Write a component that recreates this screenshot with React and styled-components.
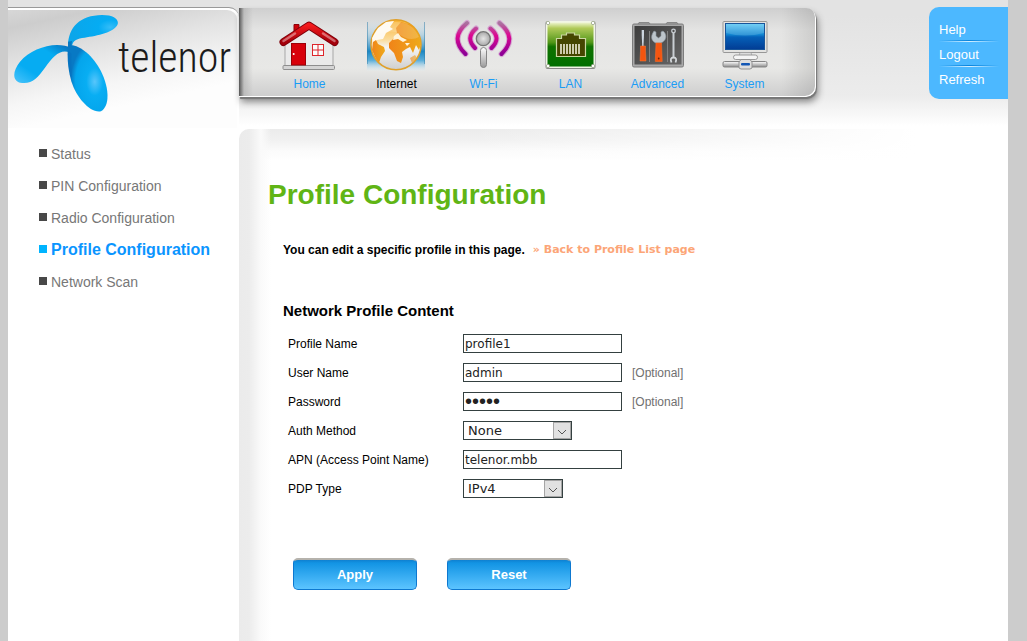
import React from 'react';
import styled, { createGlobalStyle } from 'styled-components';

const GlobalStyle = createGlobalStyle`
	* {
		box-sizing: border-box;
	}
	body {
		margin: 0;
		background: #ccc;
		font-family: 'Liberation Sans', Arial, sans-serif;
		font-size: 12px;
		color: #000;
	}
	a {
		text-decoration: none;
	}
`;

const Page = styled.div`
	display: flex;
	flex-direction: column;
	min-height: 100vh;
	margin: 0 19px 0 8px;
	background: #fff;
`;

const Header = styled.header`
	display: flex;
	align-items: flex-start;
	height: 128px;
	padding-top: 7px;
	background: linear-gradient(#e3e3e3 0, #e3e3e3 16px, #ececec 96px, #fff 126px);
`;

const Brand = styled.a`
	display: flex;
	align-items: flex-start;
	flex: none;
	width: 231px;
	height: 121px;
	padding: 6px 0 0 6px;
	border-top: 1px solid #999;
	border-radius: 0 10px 0 0;
	background: linear-gradient(168deg, #d8d8d8 0, #cdcdcd 20px, #e4e4e4 60px, #f6f6f6 96px, #fdfdfd 120px);
	box-shadow: inset -2px 2px 0 #fff;
	color: #1b1b1b;
`;

const Wordmark = styled.span`
	padding-top: 16px;
	font-family: 'Roboto Condensed', 'Liberation Sans Narrow', 'DejaVu Sans Condensed', Roboto, sans-serif;
	font-size: 42px;
	font-weight: 300;
	line-height: 56px;
`;

const Nav = styled.nav`
	display: flex;
	flex: none;
	margin-top: 1px;
	padding: 10px 28px 4px 27px;
	height: 89px;
	border-radius: 0 10px 10px 0;
	background: linear-gradient(90deg, #555 0, #aaa8 5px, #ccc0 14px),
		linear-gradient(90deg, #0000 94%, #0000001c), linear-gradient(#cfcfcf, #e4e4e3 22px, #e8e8e6 60px, #cdcdcd);
	box-shadow: inset -1px -1px 0 #fff, 1px 2px 1px #777, 2px 5px 7px #888;
`;

const NavItem = styled.a`
	display: flex;
	flex-direction: column;
	align-items: center;
	width: 87px;
	line-height: 16px;
	gap: 4px;
	color: ${props => (props.$active ? '#000' : '#1a9cf5')};
`;

const UserMenu = styled.nav`
	width: 79px;
	height: 92px;
	margin-left: auto;
	padding: 10px 9px 0 10px;
	border-radius: 10px 0 0 10px;
	background: #4cb8ff;
`;

const UserLink = styled.a`
	display: block;
	height: 25px;
	color: #fff;
	font-size: 13px;
	line-height: 25px;
	background: linear-gradient(90deg, #4cb8ff, #0a84dc 50%, #4cb8ff) 0 23px / 100% 1px no-repeat,
		linear-gradient(90deg, #4cb8ff, #d5efff 50%, #4cb8ff) 0 24px / 100% 1px no-repeat;
	&:last-child {
		background: none;
	}
`;

const Body = styled.div`
	display: flex;
	flex: 1;
	padding-top: 1px;
`;

const Sidebar = styled.ul`
	flex: none;
	width: 231px;
	margin: 0;
	padding: 9px 0 0 31px;
	list-style: none;
`;

const SideItem = styled.li`
	height: 32px;

	a {
		display: flex;
		align-items: center;
		gap: 4px;
		line-height: 32px;
		font-size: ${props => (props.$active ? '16px' : '14px')};
		font-weight: ${props => (props.$active ? 'bold' : 'normal')};
		color: ${props => (props.$active ? '#0a95ff' : '#777')};
	}
	a::before {
		content: '';
		width: 8px;
		height: 8px;
		margin-bottom: 3px;
		background: ${props => (props.$active ? '#00b4ff' : '#484848')};
	}
`;

const Main = styled.main`
	flex: 1;
	padding: 50px 24px 40px 29px;
	border-top-left-radius: 10px;
	background: linear-gradient(90deg, #ebebeb 0, #ececec 10px, #fafafa 22px, #fff0 32px),
		linear-gradient(90deg, #fff0 30%, #fff 88%),
		linear-gradient(#ebebeb 0, #f0f0f0 10px, #fbfbfb 22px, #fff 32px);
`;

const Title = styled.h1`
	margin: 0;
	font-size: 28px;
	line-height: 32px;
	color: #60b515;
`;

const Intro = styled.p`
	display: flex;
	gap: 8px;
	margin: 31px 0 45px 15px;
	font-weight: bold;
	line-height: 16px;
`;

const BackLink = styled.a`
	font-family: 'DejaVu Sans', Verdana, sans-serif;
	font-size: 11px;
	color: #fca577;
`;

const Form = styled.form`
	margin-left: 15px;
`;

const SectionTitle = styled.h2`
	margin: 0 0 15px;
	font-size: 15px;
	line-height: 16px;
`;

const Fields = styled.div`
	display: grid;
	gap: 10px;
	margin-left: 5px;
`;

const Field = styled.div`
	display: flex;
	align-items: center;
	height: 19px;

	label {
		width: 175px;
	}
`;

const TextInput = styled.input`
	width: 159px;
	height: 19px;
	padding: 0 1px;
	border: 1px solid #344040;
	border-radius: 0;
	background: #fff;
	color: #222;
	font-family: 'DejaVu Sans', Verdana, sans-serif;
	font-size: 12px;

	&[type='password'] {
		font-family: 'Liberation Sans', Arial, sans-serif;
		font-size: 20px;
	}
`;

const Hint = styled.span`
	margin-left: 10px;
	color: #707070;
`;

const SelectBox = styled.div`
	display: grid;
	width: ${props => props.$width}px;
	height: 19px;
	border: 1px solid #344040;

	select,
	svg {
		grid-area: 1 / 1;
	}
	select {
		width: 100%;
		height: 17px;
		padding: 0 0 0 4px;
		border: 0;
		appearance: none;
		background: #fff;
		color: #222;
		font-family: 'DejaVu Sans', Verdana, sans-serif;
		font-size: 13px;
		line-height: 17px;
	}
	svg {
		justify-self: end;
		pointer-events: none;
	}
`;

const Actions = styled.div`
	display: flex;
	gap: 30px;
	margin: 60px 0 0 10px;
`;

const Button = styled.button`
	width: 124px;
	height: 32px;
	padding: 0;
	border: 1px solid #0d78d0;
	border-top: 2px solid #b5b2ac;
	border-radius: 5px;
	background: linear-gradient(#0f80d0 0, #1294e4 3px, #5cc4ff);
	color: #fff;
	font-family: inherit;
	font-size: 13px;
	font-weight: bold;
`;

const Icon = ({ children }) => (
	<svg width="61" height="54" viewBox="0 0 61 54" fill="none" aria-hidden="true">
		{children}
	</svg>
);

const LogoMark = () => (
	<svg width="104" height="99" viewBox="42 39 312 297" aria-hidden="true">
		<defs>
			<radialGradient id="petalDown" cx="0.68" cy="0.55" r="0.6">
				<stop offset="0" stopColor="#58c6fb" />
				<stop offset="0.35" stopColor="#08aef3" />
				<stop offset="0.8" stopColor="#04a5ec" />
				<stop offset="1" stopColor="#0879c4" />
			</radialGradient>
			<linearGradient id="petalLeft" x1="0" y1="1" x2="1" y2="0">
				<stop offset="0" stopColor="#4dc4fb" />
				<stop offset="0.3" stopColor="#06acf2" />
				<stop offset="0.7" stopColor="#06acf2" />
				<stop offset="1" stopColor="#0869b5" />
			</linearGradient>
			<radialGradient id="petalTop" cx="0.85" cy="0.4" r="0.8">
				<stop offset="0" stopColor="#35bdf8" />
				<stop offset="0.3" stopColor="#05acf3" />
				<stop offset="1" stopColor="#0ba6ea" />
			</radialGradient>
		</defs>
		<path d="M204 134C206 78 240 43 306 42C342 42 357 55 353 70C344 94 292 105 254 110C232 112 219 118 216 134Z" fill="url(#petalTop)" />
		<path d="M216 142C168 118 96 141 60 182C38 209 36 239 60 245C94 251 111 234 136 199C160 165 182 142 210 155Z" fill="url(#petalLeft)" />
		<path d="M204 134C232 126 277 160 303 211C327 259 331 314 303 331C271 338 229 290 214 241C203 204 201 165 204 134Z" fill="url(#petalDown)" />
		<path d="M204 122L216 120L214 137L204 139Z" fill="#0878c2" />
		<path d="M204 150L214 157Q214 190 215 235Q203 197 204 150Z" fill="#0870bd" opacity=".55" />
	</svg>
);

const HomeIcon = () => (
	<Icon>
		<defs>
			<linearGradient id="roof" x1="0" y1="0" x2="0" y2="1">
				<stop offset="0" stopColor="#f31a1c" />
				<stop offset="1" stopColor="#a4000b" />
			</linearGradient>
		</defs>
		<path d="M6 24L30 8L54 24V48H6Z" fill="#eaeaea" stroke="#a7a7a7" />
		<rect x="4" y="47.5" width="51.5" height="4" rx="1" fill="#d5d5d5" stroke="#8e8e8e" />
		<path d="M15 15V6.500H20V11Z" fill="#cf0008" stroke="#8c0008" />
		<path d="M4.500 24L30 7.500L55.500 24" stroke="#7d000a" strokeWidth="8" strokeLinecap="round" strokeLinejoin="round" />
		<path d="M4.500 24L30 7.500L55.500 24" stroke="url(#roof)" strokeWidth="6" strokeLinecap="round" strokeLinejoin="round" />
		<path d="M4.500 23L16 15.500M55.500 23L44 15.500" stroke="#fff" strokeOpacity=".4" strokeWidth="2.500" strokeLinecap="round" />
		<rect x="12.500" y="25.500" width="14" height="21.500" fill="#d8000a" stroke="#9c0007" />
		<circle cx="14.700" cy="36" r="1" fill="#fff" />
		<rect x="33.500" y="26.500" width="11" height="11" fill="#fbfbfb" stroke="#dd252b" />
		<path d="M39 26V38M33 32H45" stroke="#dd252b" />
	</Icon>
);

const InternetIcon = () => (
	<Icon>
		<defs>
			<linearGradient id="beam" x1="0" y1="0" x2="0" y2="1">
				<stop offset="0" stopColor="#c8dde8" stopOpacity="0" />
				<stop offset="0.3" stopColor="#9cc8df" stopOpacity=".6" />
				<stop offset="0.62" stopColor="#1c87c3" />
				<stop offset="0.8" stopColor="#5fb0da" />
				<stop offset="1" stopColor="#e4eef2" stopOpacity=".2" />
			</linearGradient>
			<linearGradient id="sea" x1="0" y1="0" x2="0" y2="1">
				<stop offset="0" stopColor="#f8b233" />
				<stop offset="0.4" stopColor="#fbdc9c" />
				<stop offset="0.55" stopColor="#f4f4f4" />
				<stop offset="1" stopColor="#cfcfcf" />
			</linearGradient>
			<linearGradient id="land" x1="0" y1="0" x2="1" y2="0">
				<stop offset="0" stopColor="#f08418" />
				<stop offset="1" stopColor="#eea91b" />
			</linearGradient>
		</defs>
		<rect x="1" y="1" width="58" height="52" fill="url(#beam)" />
		<path d="M1.500 4V46M58.500 4V46" stroke="#2f7da9" strokeOpacity=".5" />
		<circle cx="30" cy="26.700" r="25" fill="url(#sea)" stroke="#e0a02b" strokeWidth="1.500" />
		<path d="M12 10L20 4L28 3L24 9L27 11L20 15L17 21L11 22L7 27L6 20Z" fill="#fffaf0" />
		<path d="M7 24L10 22L12 26L18 29L19 33L15 39L13 45L9 39L6 32Z" fill="url(#land)" />
		<path d="M30 10L35 4L46 7L53 16L55 26L53 32L50 27L47 35L44 29L40 31L36 34L37 39L35 45L31 43L28 35L23 30L23 25L28 20L32 20L31 15Z" fill="url(#land)" />
		<path d="M28 18L32 15L35 19L41 22L37 24L32 21L27 22ZM39 25L44 25L41 28Z" fill="#fff4da" />
		<path d="M44 40L49 37L51 40L46 45Z" fill="url(#land)" opacity=".6" />
		<path d="M7 19C10 8 20 4 30 4C41 4 49 9 53 19Q43 25 30 14Q20 12 7 19Z" fill="#fff" opacity=".18" />
	</Icon>
);

const WifiIcon = () => (
	<Icon>
		<defs>
			<linearGradient id="wave" x1="0" y1="0" x2="0" y2="1">
				<stop offset="0" stopColor="#a9749f" />
				<stop offset="0.4" stopColor="#dc0791" />
				<stop offset="1" stopColor="#8d0096" />
			</linearGradient>
			<radialGradient id="ball">
				<stop offset="0" stopColor="#e6e6e6" />
				<stop offset="1" stopColor="#a8a8a8" />
			</radialGradient>
			<linearGradient id="stick" x1="0" y1="0" x2="0" y2="1">
				<stop offset="0" stopColor="#fff" />
				<stop offset="1" stopColor="#999" />
			</linearGradient>
		</defs>
		<g strokeLinecap="round">
			<path d="M14 5Q-4 20 12.500 36M46.500 5Q65 20 48.500 36M23 10.500Q12 20 22 30M37.500 10.500Q49 20 38.500 30" stroke="#d5a7d2" strokeWidth="6" />
			<path d="M14 5Q-4 20 12.500 36M46.500 5Q65 20 48.500 36M23 10.500Q12 20 22 30M37.500 10.500Q49 20 38.500 30" stroke="url(#wave)" strokeWidth="4" />
		</g>
		<circle cx="30.300" cy="20.700" r="7" fill="url(#ball)" stroke="#777" strokeWidth="1.300" />
		<rect x="27.500" y="29.500" width="6" height="20" rx="3" fill="url(#stick)" stroke="#858585" />
	</Icon>
);

const LanIcon = () => (
	<Icon>
		<defs>
			<linearGradient id="plate" x1="0" y1="0" x2="0" y2="1">
				<stop offset="0" stopColor="#eff6d1" />
				<stop offset="0.13" stopColor="#b0ca59" />
				<stop offset="0.45" stopColor="#539719" />
				<stop offset="0.55" stopColor="#107200" />
				<stop offset="1" stopColor="#007000" />
			</linearGradient>
		</defs>
		<rect x="5.500" y="3" width="50" height="48" rx="2" fill="#888" />
		<rect x="6" y="3" width="49" height="47" rx="2" fill="#f1f5e6" />
		<rect x="7.500" y="4.500" width="46" height="44" fill="url(#plate)" />
		<path d="M16.500 20.500H21.500V17H26.500V15H34.500V17H39.500V20.500H45.500V38.500H16.500Z" fill="#454600" stroke="#cbd8a2" strokeWidth="1.200" />
		<path d="M21 26V36M24 26V36M27 26V36M30 26V36M33 26V36M36 26V36M39 26V36" stroke="#efedd8" strokeWidth="1.600" />
		<g fill="#fff" stroke="#8b9878" strokeWidth=".7">
			<circle cx="8" cy="5" r="1.700" />
			<circle cx="53" cy="5" r="1.700" />
			<circle cx="8" cy="48" r="1.700" />
			<circle cx="53" cy="48" r="1.700" />
		</g>
	</Icon>
);

const AdvancedIcon = () => (
	<Icon>
		<defs>
			<linearGradient id="case" x1="0" y1="0" x2="1" y2="1">
				<stop offset="0" stopColor="#3d3d3d" />
				<stop offset="1" stopColor="#666" />
			</linearGradient>
		</defs>
		<path d="M11 6L12 4.500H22L23 6M39 6L40 4.500H50L51 6" fill="#aaa" stroke="#888" />
		<rect x="5.500" y="6" width="51" height="43" rx="1.500" fill="#a9a9a9" stroke="#7d7d7d" />
		<rect x="7.500" y="8" width="47" height="38.500" fill="url(#case)" />
		<path d="M22.500 13V44M40.500 13V44" stroke="#818181" />
		<path d="M14.700 12H17V17L16.500 28H15.200L14.700 17Z" fill="#ccd5de" />
		<path d="M13.500 28H18.500V33L19 43H13L13.500 33Z" fill="#f35510" stroke="#fa7b37" strokeWidth=".5" />
		<path d="M27 13C22 20 26 24 29 25H34C39 23 41 17 36 13L34 14V18L31.500 20L29 18V14Z" fill="#bdc5cb" stroke="#8c969f" strokeWidth=".6" />
		<path d="M29 25H34.500L35.200 43.500H28.300Z" fill="#f35510" stroke="#fa6a22" strokeWidth=".6" />
		<circle cx="31.700" cy="40.500" r=".9" fill="#662408" />
		<path d="M46.500 15V40" stroke="#c9ced3" strokeWidth="2" />
		<circle cx="46.500" cy="13" r="1.800" stroke="#c9ced3" strokeWidth="1.300" />
		<path d="M44.500 44.500Q42.500 39.500 46.500 39.500T48.500 44.500" stroke="#d3d7da" strokeWidth="1.800" />
	</Icon>
);

const SystemIcon = () => (
	<Icon>
		<defs>
			<linearGradient id="screen" x1="0" y1="0" x2="0" y2="1">
				<stop offset="0" stopColor="#5cc8f4" />
				<stop offset="0.42" stopColor="#1287d2" />
				<stop offset="0.52" stopColor="#0560b8" />
				<stop offset="1" stopColor="#023c94" />
			</linearGradient>
			<linearGradient id="cable" x1="0" y1="0" x2="0" y2="1">
				<stop offset="0" stopColor="#fff" />
				<stop offset="1" stopColor="#8b8b8b" />
			</linearGradient>
		</defs>
		<rect x="9" y="3.500" width="44" height="31" rx="1" fill="#e3e3e1" stroke="#979797" />
		<rect x="11.500" y="5.500" width="39" height="26" fill="url(#screen)" stroke="#17549a" />
		<path d="M12 6H50V15Q31 20 12 15Z" fill="#fff" opacity=".15" />
		<path d="M26 34.500H37L38 38H25Z" fill="#ddd" stroke="#999" strokeWidth=".7" />
		<rect x="19.500" y="37" width="24" height="4.500" rx="2.200" fill="#f5f5f5" stroke="#999" />
		<rect x="9" y="43.500" width="44" height="5.500" rx="1.500" fill="url(#cable)" stroke="#858585" />
		<path d="M27 41.500H36L38 44V50L36 51H27L25 50V44Z" fill="#dedede" stroke="#929292" />
		<rect x="27" y="45" width="9" height="2.500" rx="1" fill="#1357b5" />
	</Icon>
);

const Chevron = () => (
	<svg width="18" height="17" viewBox="0 0 18 17" fill="none" aria-hidden="true">
		<rect x=".5" y=".5" width="17" height="16" fill="#e1e1e1" stroke="#a5a5a5" />
		<path d="M5 8L9 12L13 8" stroke="#555" />
	</svg>
);

const navItems = [
	{ label: 'Home', icon: HomeIcon },
	{ label: 'Internet', icon: InternetIcon, active: true },
	{ label: 'Wi-Fi', icon: WifiIcon },
	{ label: 'LAN', icon: LanIcon },
	{ label: 'Advanced', icon: AdvancedIcon },
	{ label: 'System', icon: SystemIcon }
];

const sideItems = ['Status', 'PIN Configuration', 'Radio Configuration', 'Profile Configuration', 'Network Scan'];

const TextField = ({ id, label, value, type = 'text', optional }) => (
	<Field>
		<label htmlFor={id}>{label}</label>
		<TextInput id={id} type={type} defaultValue={value} />
		{optional && <Hint>[Optional]</Hint>}
	</Field>
);

const SelectField = ({ id, label, options, width }) => (
	<Field>
		<label htmlFor={id}>{label}</label>
		<SelectBox $width={width}>
			<select id={id}>
				{options.map(option => (
					<option key={option}>{option}</option>
				))}
			</select>
			<Chevron />
		</SelectBox>
	</Field>
);

const App = () => (
	<>
		<GlobalStyle />
		<Page>
			<Header>
				<Brand href="#">
					<LogoMark />
					<Wordmark>telenor</Wordmark>
				</Brand>
				<Nav>
					{navItems.map(({ label, icon: ItemIcon, active }) => (
						<NavItem key={label} href="#" $active={active}>
							<ItemIcon />
							{label}
						</NavItem>
					))}
				</Nav>
				<UserMenu>
					<UserLink href="#">Help</UserLink>
					<UserLink href="#">Logout</UserLink>
					<UserLink href="#">Refresh</UserLink>
				</UserMenu>
			</Header>
			<Body>
				<Sidebar>
					{sideItems.map(item => (
						<SideItem key={item} $active={item === 'Profile Configuration'}>
							<a href="#">{item}</a>
						</SideItem>
					))}
				</Sidebar>
				<Main>
					<Title>Profile Configuration</Title>
					<Intro>
						You can edit a specific profile in this page.
						<BackLink href="#">» Back to Profile List page</BackLink>
					</Intro>
					<Form onSubmit={e => e.preventDefault()}>
						<SectionTitle>Network Profile Content</SectionTitle>
						<Fields>
							<TextField id="profile" label="Profile Name" value="profile1" />
							<TextField id="user" label="User Name" value="admin" optional />
							<TextField id="password" label="Password" type="password" value="admin" optional />
							<SelectField id="auth" label="Auth Method" options={['None']} width={109} />
							<TextField id="apn" label="APN (Access Point Name)" value="telenor.mbb" />
							<SelectField id="pdp" label="PDP Type" options={['IPv4']} width={100} />
						</Fields>
						<Actions>
							<Button type="submit">Apply</Button>
							<Button type="reset">Reset</Button>
						</Actions>
					</Form>
				</Main>
			</Body>
		</Page>
	</>
);

export default App;
